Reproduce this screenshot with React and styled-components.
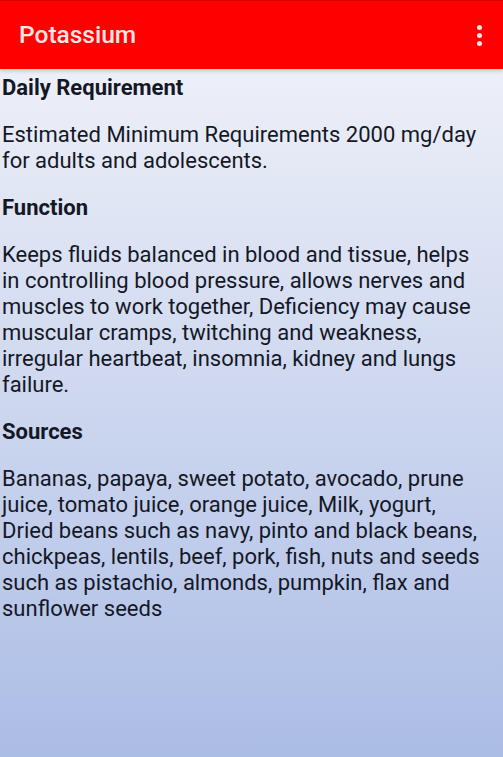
import styled, { createGlobalStyle } from "styled-components";

const GlobalStyle = createGlobalStyle`
  html, body {
    margin: 0;
    padding: 0;
  }
  body {
    font-family: Roboto, "Noto Sans", sans-serif;
  }
`;

const Screen = styled.div`
  width: 503px;
  height: 757px;
  display: flex;
  flex-direction: column;
  overflow: hidden;
  background: linear-gradient(#f4f5fa 0%, #abbce5 100%);
`;

const AppBar = styled.header`
  height: 69px;
  flex: none;
  display: flex;
  align-items: center;
  justify-content: space-between;
  padding: 0 17px 0 19px;
  background: #ff0000;
  border-top: 1px solid #d80000;
  box-sizing: border-box;
  box-shadow: 0 2px 4px rgba(0, 0, 0, 0.18);
`;

const Title = styled.h1`
  margin: 0 0 2px;
  font-size: 24.5px;
  font-weight: 500;
  color: #ffe6e6;
`;

const MenuButton = styled.div`
  display: flex;
  flex-direction: column;
  gap: 3px;
  padding: 4px;
`;

const Dot = styled.span`
  width: 5px;
  height: 5px;
  border-radius: 50%;
  background: #ffe6e6;
`;

const Content = styled.main`
  width: 480px;
  padding: 6px 2px 0;
  color: #141826;
  font-size: 22px;
  line-height: 26px;
`;

const Heading = styled.h2`
  margin: 0;
  font-size: 22px;
  font-weight: 700;
  line-height: 26px;
`;

const Paragraph = styled.p`
  margin: 21px 0 21px;
`;

const sections = [
  {
    title: "Daily Requirement",
    text: "Estimated Minimum Requirements 2000 mg/day for adults and adolescents.",
  },
  {
    title: "Function",
    text: "Keeps fluids balanced in blood and tissue, helps in controlling blood pressure, allows nerves and muscles to work together, Deficiency may cause muscular cramps, twitching and weakness, irregular heartbeat, insomnia, kidney and lungs failure.",
  },
  {
    title: "Sources",
    text: "Bananas, papaya, sweet potato, avocado, prune juice, tomato juice, orange juice, Milk, yogurt, Dried beans such as navy, pinto and black beans, chickpeas, lentils, beef, pork, fish, nuts and seeds such as pistachio, almonds, pumpkin, flax and sunflower seeds",
  },
];

const App = () => {
  return (
    <Screen>
      <GlobalStyle />
      <AppBar>
        <Title>Potassium</Title>
        <MenuButton>
          <Dot />
          <Dot />
          <Dot />
        </MenuButton>
      </AppBar>
      <Content>
        {sections.map((s) => (
          <section key={s.title}>
            <Heading>{s.title}</Heading>
            <Paragraph>{s.text}</Paragraph>
          </section>
        ))}
      </Content>
    </Screen>
  );
};

export default App;
